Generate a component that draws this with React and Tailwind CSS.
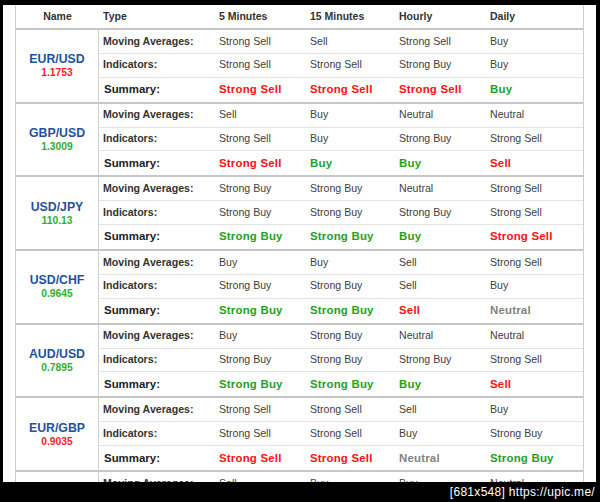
import React from "react";

const rows = [
  {
    pair: "EUR/USD",
    price: "1.1753",
    up: false,
    ma: ["Strong Sell", "Sell", "Strong Sell", "Buy"],
    ind: ["Strong Sell", "Strong Sell", "Strong Buy", "Buy"],
    sum: ["Strong Sell", "Strong Sell", "Strong Sell", "Buy"],
  },
  {
    pair: "GBP/USD",
    price: "1.3009",
    up: true,
    ma: ["Sell", "Buy", "Neutral", "Neutral"],
    ind: ["Strong Sell", "Buy", "Strong Buy", "Strong Sell"],
    sum: ["Strong Sell", "Buy", "Buy", "Sell"],
  },
  {
    pair: "USD/JPY",
    price: "110.13",
    up: true,
    ma: ["Strong Buy", "Strong Buy", "Neutral", "Strong Sell"],
    ind: ["Strong Buy", "Strong Buy", "Strong Buy", "Strong Sell"],
    sum: ["Strong Buy", "Strong Buy", "Buy", "Strong Sell"],
  },
  {
    pair: "USD/CHF",
    price: "0.9645",
    up: true,
    ma: ["Buy", "Buy", "Sell", "Strong Sell"],
    ind: ["Strong Buy", "Strong Buy", "Sell", "Buy"],
    sum: ["Strong Buy", "Strong Buy", "Sell", "Neutral"],
  },
  {
    pair: "AUD/USD",
    price: "0.7895",
    up: true,
    ma: ["Buy", "Strong Buy", "Neutral", "Neutral"],
    ind: ["Strong Buy", "Strong Buy", "Strong Buy", "Strong Sell"],
    sum: ["Strong Buy", "Strong Buy", "Buy", "Sell"],
  },
  {
    pair: "EUR/GBP",
    price: "0.9035",
    up: false,
    ma: ["Strong Sell", "Strong Sell", "Sell", "Buy"],
    ind: ["Strong Sell", "Strong Sell", "Buy", "Strong Buy"],
    sum: ["Strong Sell", "Strong Sell", "Neutral", "Strong Buy"],
  },
];

const cols = "grid grid-cols-[116px_91px_89px_91px_1fr] items-center";

const sumColor = (v) => {
  if (v.includes("Sell")) return "text-[#ff1111]";
  if (v.includes("Buy")) return "text-[#1ea21e]";
  return "text-[#838383]";
};

const SubRow = ({ label, values, summary, last }) => (
  <div
    className={`${cols} h-[23.9px] ${last ? "" : "border-b border-[#e3e3e3]"}`}
  >
    {summary ? (
      <div className="pl-[5px] text-[11.45px] font-bold text-[#222]">Summary:</div>
    ) : (
      <div className="pl-[4px] text-[10.6px] font-bold text-[#333]">{label}</div>
    )}
    {values.map((v, i) => (
      <div
        key={i}
        className={
          summary
            ? `pl-[4px] text-[11.45px] font-bold tracking-[0.2px] ${sumColor(v)}`
            : "pl-[4px] text-[10.6px] text-[#404040]"
        }
      >
        {v}
      </div>
    ))}
  </div>
);

export default function App() {
  return (
    <div
      className="relative w-[600px] h-[502px] bg-black overflow-hidden"
      style={{ fontFamily: '"Liberation Sans", Arial, sans-serif' }}
    >
      <div className="ml-[3px] mt-[5px] w-[593px] h-[477px] bg-white overflow-hidden">
        <div className="ml-[12px] w-[569px] border-l border-r border-[#cfcfcf]">
          {/* header */}
          <div className="grid grid-cols-[83px_116px_91px_89px_91px_1fr] items-center h-[25px] border-b-2 border-[#c6c6c6] text-[10.5px] font-bold text-[#333]">
            <div className="text-center">Name</div>
            <div className="pl-[4px]">Type</div>
            <div className="pl-[4px]">5 Minutes</div>
            <div className="pl-[4px]">15 Minutes</div>
            <div className="pl-[4px]">Hourly</div>
            <div className="pl-[4px]">Daily</div>
          </div>

          {rows.map((r) => (
            <div key={r.pair} className="flex border-b-2 border-[#c6c6c6]">
              <div className="w-[83px] shrink-0 border-r border-[#cfcfcf] flex flex-col items-center justify-center">
                <div className="text-[12.3px] font-bold text-[#1d52a0] leading-[14px]">
                  {r.pair}
                </div>
                <div
                  className={`text-[10.3px] font-bold leading-[13px] ${
                    r.up ? "text-[#2fae2f]" : "text-[#ff2020]"
                  }`}
                >
                  {r.price}
                </div>
              </div>
              <div className="flex-1">
                <SubRow label="Moving Averages:" values={r.ma} />
                <SubRow label="Indicators:" values={r.ind} />
                <SubRow summary values={r.sum} last />
              </div>
            </div>
          ))}

          {/* partly hidden next group */}
          <div className="flex">
            <div className="w-[83px] shrink-0 border-r border-[#cfcfcf] h-[24px]" />
            <div className="flex-1">
              <SubRow label="Moving Averages:" values={["Sell", "Buy", "Buy", "Neutral"]} />
            </div>
          </div>
        </div>
      </div>

      {/* watermark */}
      <div className="absolute right-[5px] bottom-[3px] text-white text-[12px] tracking-[0.3px] leading-[14px]">
        [681x548] https://upic.me/
      </div>
    </div>
  );
}
